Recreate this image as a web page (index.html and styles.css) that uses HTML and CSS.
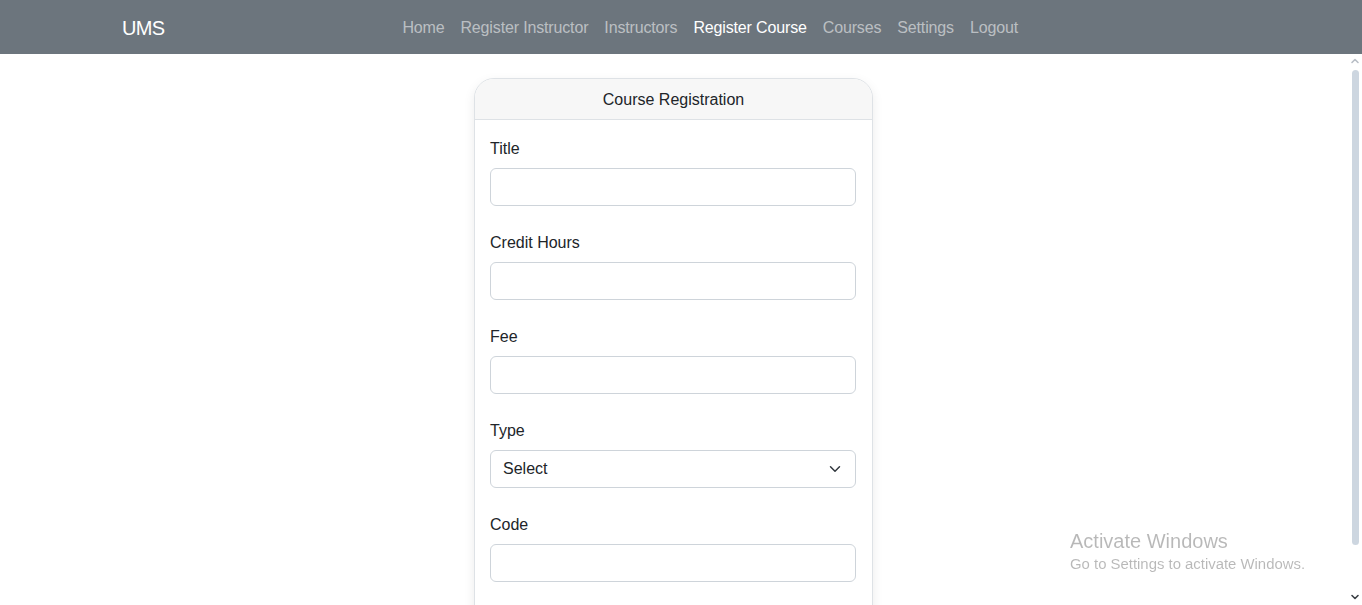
FILE: index.html
```html
<!DOCTYPE html>
<html lang="en">
<head>
<meta charset="utf-8">
<title>UMS - Register Course</title>
<link rel="stylesheet" href="styles.css">
</head>
<body>
<nav class="navbar">
  <div class="nav-container">
    <a class="brand" href="#">UMS</a>
    <ul class="nav-links">
      <li><a href="#">Home</a></li>
      <li><a href="#">Register Instructor</a></li>
      <li><a href="#">Instructors</a></li>
      <li><a class="active" href="#">Register Course</a></li>
      <li><a href="#">Courses</a></li>
      <li><a href="#">Settings</a></li>
      <li><a href="#">Logout</a></li>
    </ul>
  </div>
</nav>
<div class="page">
  <main class="main">
    <div class="card">
      <div class="card-header">Course Registration</div>
      <form class="card-body">
        <div class="group">
          <label class="label">Title</label>
          <input class="control" type="text">
        </div>
        <div class="group">
          <label class="label">Credit Hours</label>
          <input class="control" type="text">
        </div>
        <div class="group">
          <label class="label">Fee</label>
          <input class="control" type="text">
        </div>
        <div class="group">
          <label class="label">Type</label>
          <select class="control select">
            <option>Select</option>
          </select>
        </div>
        <div class="group">
          <label class="label">Code</label>
          <input class="control" type="text">
        </div>
      </form>
    </div>
  </main>
  <div class="scrollbar" aria-hidden="true">
    <svg class="sb-arrow" width="14" height="12" viewBox="0 0 14 12"><path d="M4 7.5l3-3 3 3" fill="none" stroke="#b8bec6" stroke-width="1.6" stroke-linecap="round" stroke-linejoin="round"/></svg>
    <div class="sb-track"><div class="sb-thumb"></div></div>
    <svg class="sb-arrow" width="14" height="12" viewBox="0 0 14 12"><path d="M4 4.5l3 3 3-3" fill="none" stroke="#3c4046" stroke-width="1.6" stroke-linecap="round" stroke-linejoin="round"/></svg>
  </div>
</div>
<div class="watermark">
  <div class="wm-title">Activate Windows</div>
  <div class="wm-sub">Go to Settings to activate Windows.</div>
</div>
</body>
</html>
```
FILE: styles.css
```css
* { box-sizing: border-box; }
html, body { height: 100%; }
body {
  margin: 0;
  font-family: "Liberation Sans", Arial, sans-serif;
  font-size: 16px;
  line-height: 1.5;
  color: #212529;
  background: #fff;
  display: flex;
  flex-direction: column;
  overflow: hidden;
}
.navbar {
  background: #6c757d;
  padding: 8px 0;
  flex: 0 0 auto;
}
.nav-container {
  width: 1140px;
  margin: 0 auto;
  padding: 0 12px;
  display: flex;
  align-items: center;
}
.brand {
  color: #fff;
  text-decoration: none;
  font-size: 20px;
  line-height: 30px;
  padding: 5px 0 3px;
  margin-left: -1px;
  margin-right: 17px;
  letter-spacing: -0.7px;
}
.nav-links {
  list-style: none;
  margin: 0 auto;
  padding: 0;
  display: flex;
}
.nav-links a {
  display: block;
  padding: 9px 8px 7px;
  color: rgba(255, 255, 255, 0.55);
  text-decoration: none;
  line-height: 22px;
  letter-spacing: -0.15px;
}
.nav-links a.active { color: #fff; }

.page {
  flex: 1 1 auto;
  display: flex;
  min-height: 0;
}
.main {
  flex: 1 1 auto;
  overflow: hidden;
  padding: 24px 1px 40px 0;
}
.scrollbar {
  flex: 0 0 14px;
  display: flex;
  flex-direction: column;
  align-items: center;
  padding: 0 0 2px;
}
.sb-arrow {
  flex: 0 0 auto;
  margin-top: 1px;
}
.sb-track {
  flex: 1 1 auto;
  width: 100%;
  padding: 3px 0 45px 0;
  display: flex;
  justify-content: center;
}
.sb-thumb {
  width: 7px;
  height: 100%;
  background: #cdd6e0;
  border-radius: 4px;
  margin-left: 1px;
}

.card {
  width: 399px;
  margin: 0 auto;
  border: 1px solid #dee2e6;
  border-radius: 20px;
  background: #fff;
  box-shadow: 0 4px 12px rgba(0, 0, 0, 0.08);
  overflow: hidden;
}
.card-header {
  background: #f7f7f7;
  border-bottom: 1px solid #dee2e6;
  padding: 9px 16px 7px;
  text-align: center;
  line-height: 24px;
}
.card-body {
  padding: 16px 16px 60px 15px;
  display: flex;
  flex-direction: column;
}
.group {
  display: flex;
  flex-direction: column;
  margin-bottom: 24px;
}
.label {
  line-height: 24px;
  padding-top: 1px;
  margin-bottom: 7px;
}
.control {
  height: 38px;
  width: 100%;
  border: 1px solid #ced4da;
  border-radius: 6px;
  padding: 6px 12px;
  font: inherit;
  color: #212529;
  background: #fff;
}
.select {
  appearance: none;
  -webkit-appearance: none;
  background-image: url("data:image/svg+xml,%3Csvg xmlns='http://www.w3.org/2000/svg' viewBox='0 0 16 16'%3E%3Cpath fill='none' stroke='%23343a40' stroke-linecap='round' stroke-linejoin='round' stroke-width='2' d='m2 5 6 6 6-6'/%3E%3C/svg%3E");
  background-repeat: no-repeat;
  background-position: right 12px center;
  background-size: 16px 12px;
  padding-right: 36px;
}
.watermark {
  position: fixed;
  left: 1070px;
  top: 527px;
  color: rgba(0, 0, 0, 0.28);
  pointer-events: none;
}
.wm-title {
  font-size: 20px;
  line-height: 28px;
}
.wm-sub {
  font-size: 14.9px;
  line-height: 18px;
}
```
